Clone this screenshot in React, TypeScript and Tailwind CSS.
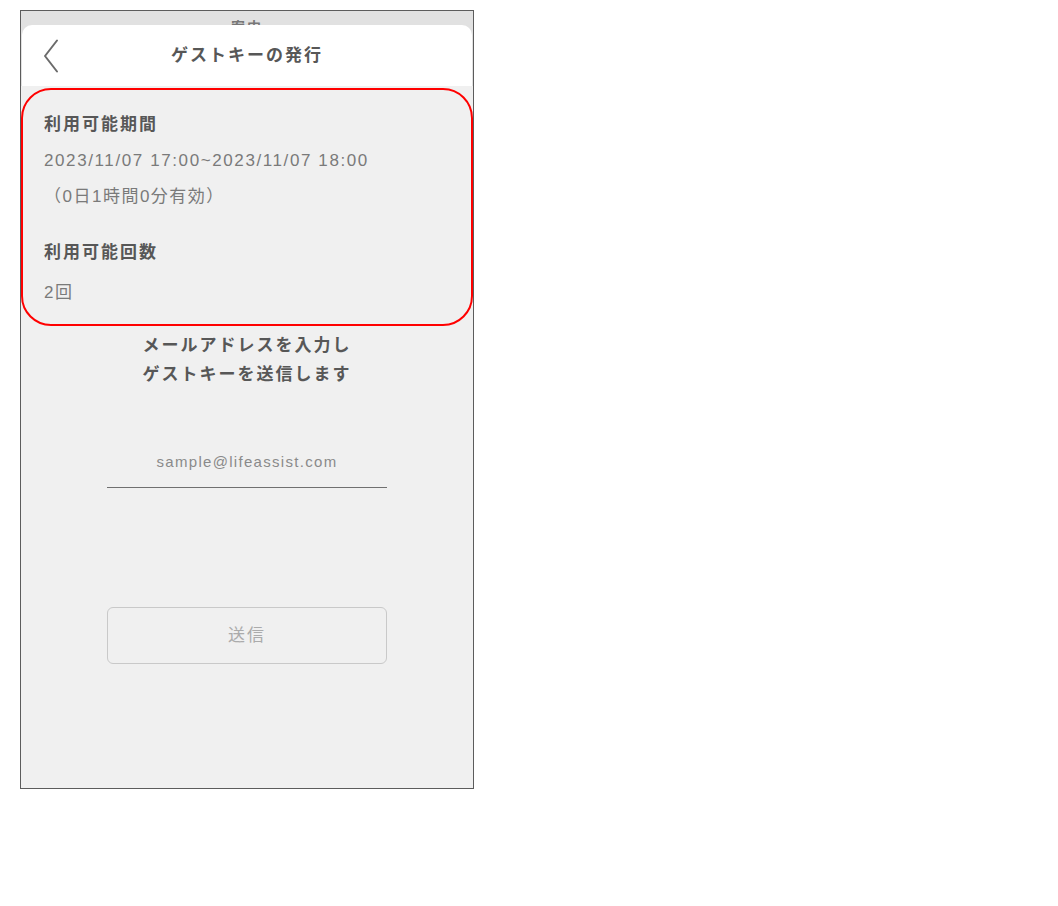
import React from 'react';

const font = "font-['Liberation_Sans','Noto_Sans_CJK_JP',sans-serif]";

const BackChevron: React.FC = () => (
  <svg width="16" height="34" viewBox="0 0 16 34" fill="none" aria-hidden="true">
    <polyline points="14,1.5 2,17 14,32.5" stroke="#6b6b6b" strokeWidth="2" strokeLinecap="round" strokeLinejoin="round" />
  </svg>
);

const App: React.FC = () => {
  return (
    <div className={`min-h-[906px] bg-white pl-[20px] pt-[10px] ${font}`}>
      <div className="w-[454px] h-[779px] border border-[#5c5c5c] bg-[#e1e1e1] flex flex-col overflow-hidden">
        {/* page behind the sheet, only the top of its title is visible */}
        <div className="h-[14px] overflow-hidden flex justify-center">
          <span className="pt-[9px] text-[14px] leading-[14px] font-bold tracking-[2px] text-[#777]">案内</span>
        </div>

        <header className="mx-[1px] h-[61px] bg-white rounded-t-[10px] grid grid-cols-[64px_1fr_64px] items-center">
          <div className="pl-[21px] flex items-center">
            <BackChevron />
          </div>
          <h1 className="text-center text-[17px] font-bold tracking-[2px] text-[#575757]">ゲストキーの発行</h1>
          <div />
        </header>

        <main className="flex-1 bg-[#f0f0f0] flex flex-col">
          <section className="mt-[2px] h-[238px] border-2 border-[#ff0000] rounded-[30px] pt-[17px] pl-[21px]">
            <p className="text-[17px] leading-[36px] font-bold tracking-[2px] text-[#575757]">利用可能期間</p>
            <p className="text-[17px] leading-[36px] tracking-[1.6px] text-[#7a7a7a]">2023/11/07 17:00~2023/11/07 18:00</p>
            <p className="text-[17px] leading-[36px] tracking-[1.5px] text-[#7a7a7a]">（0日1時間0分有効）</p>
            <p className="mt-[20px] text-[17px] leading-[36px] font-bold tracking-[2px] text-[#575757]">利用可能回数</p>
            <p className="mt-[4px] text-[17px] leading-[36px] tracking-[1.5px] text-[#7a7a7a]">2回</p>
          </section>

          <div className="mt-[5px] text-center text-[17px] leading-[29px] font-bold tracking-[2px] text-[#575757]">
            <p>メールアドレスを入力し</p>
            <p>ゲストキーを送信します</p>
          </div>

          <div className="mt-[61px] mx-auto w-[280px] border-b-[1.5px] border-[#707070] pb-[13px]">
            <input
              type="email"
              placeholder="sample@lifeassist.com"
              className="w-full bg-transparent text-center text-[15px] leading-[22px] tracking-[1.3px] text-[#777] placeholder:text-[#8a8a8a] outline-none"
            />
          </div>

          <button className="mt-[119px] mx-auto w-[280px] h-[57px] rounded-[6px] border-[1.5px] border-[#c9c9c9] text-[17px] tracking-[2px] text-[#ababab]">
            送信
          </button>
        </main>
      </div>
    </div>
  );
};

export default App;
